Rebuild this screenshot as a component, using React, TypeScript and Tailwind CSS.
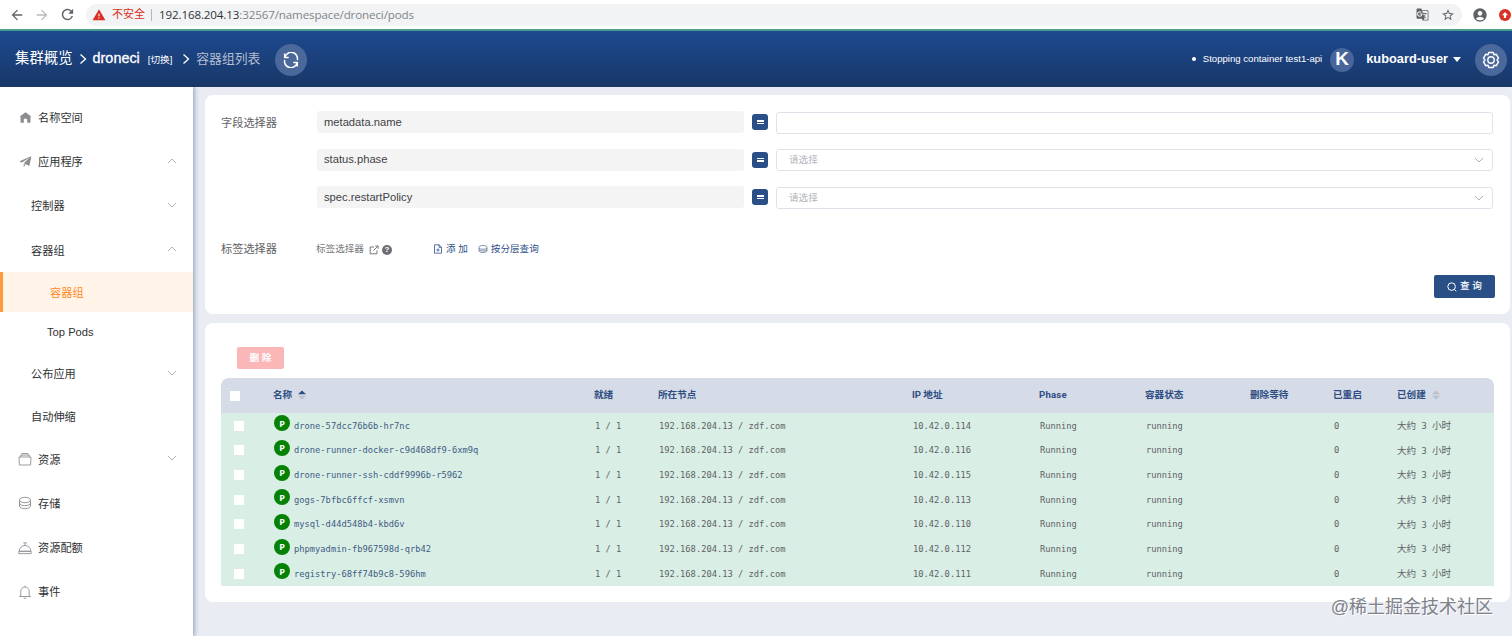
import type { ReactNode } from "react";
import clsx from "clsx";
import {
  MdArrowBack,
  MdArrowForward,
  MdGTranslate,
  MdRefresh,
  MdStarBorder,
  MdWarning,
  MdAccountCircle,
} from "react-icons/md";

type IconName = "home" | "plane" | "files" | "coins" | "dish" | "bell";

type MenuItem = {
  label: string;
  icon?: IconName;
  arrow?: "up" | "down";
  active?: boolean;
  className: string;
};

const menu: MenuItem[] = [
  { label: "名称空间", icon: "home", className: "h-[45px] pl-[18px]" },
  { label: "应用程序", icon: "plane", arrow: "up", className: "h-[43px] pl-[18px]" },
  { label: "控制器", arrow: "down", className: "h-[45px] pl-[31px]" },
  { label: "容器组", arrow: "up", className: "h-[44px] pl-[31px]" },
  { label: "容器组", active: true, className: "h-10 pl-[47px]" },
  { label: "Top Pods", className: "h-10 pl-[47px]" },
  { label: "公布应用", arrow: "down", className: "h-[43px] pl-[31px]" },
  { label: "自动伸缩", className: "h-[43px] pl-[31px]" },
  { label: "资源", icon: "files", arrow: "down", className: "h-[42px] pl-[18px]" },
  { label: "存储", icon: "coins", className: "h-[46px] pl-[18px]" },
  { label: "资源配额", icon: "dish", className: "h-[43px] pl-[18px]" },
  { label: "事件", icon: "bell", className: "h-[45px] pl-[18px]" },
];

const pods = [
  { name: "drone-57dcc76b6b-hr7nc", ip: "10.42.0.114" },
  { name: "drone-runner-docker-c9d468df9-6xm9q", ip: "10.42.0.116" },
  { name: "drone-runner-ssh-cddf9996b-r5962", ip: "10.42.0.115" },
  { name: "gogs-7bfbc6ffcf-xsmvn", ip: "10.42.0.113" },
  { name: "mysql-d44d548b4-kbd6v", ip: "10.42.0.110" },
  { name: "phpmyadmin-fb967598d-qrb42", ip: "10.42.0.112" },
  { name: "registry-68ff74b9c8-596hm", ip: "10.42.0.111" },
];

const columns =
  "grid grid-cols-[52px_321px_64px_254px_127px_106px_105px_83px_64px_1fr]";

const MenuIcon = ({ name }: { name: IconName }) => {
  if (name === "home") {
    return (
      <svg viewBox="0 0 1024 1024" className="size-[13px] fill-[#8b8d91]">
        <path d="M512 96 60 440h60v488h260V660q0-50 50-50h164q50 0 50 50v268h260V440h60z" />
      </svg>
    );
  }
  if (name === "plane") {
    return (
      <svg viewBox="0 0 1024 1024" className="size-[13px] fill-[#8b8d91]">
        <path d="m32 500 944-404-160 776-440-232L820 220 230 590zM370 700l150 76-150 160z" />
      </svg>
    );
  }
  return (
    <svg
      viewBox="0 0 14 14"
      className="size-[14px] fill-none stroke-[#8f9195] stroke-[0.9]"
      strokeLinejoin="round"
    >
      {name === "files" && (
        <path d="M1 5h12l-.4 8H1.4zM2.6 5V3.1h8.8V5M4 3V1.5h6V3" />
      )}
      {name === "coins" && (
        <>
          <ellipse cx="7" cy="4" rx="5.5" ry="2.7" />
          <path d="M1.5 4v3c0 1.5 2.5 2.7 5.5 2.7s5.5-1.2 5.5-2.7V4M1.5 7v3c0 1.5 2.5 2.7 5.5 2.7s5.5-1.2 5.5-2.7V7" />
        </>
      )}
      {name === "dish" && (
        <path d="M1.2 10.3a5.8 5.8 0 0 1 11.6 0zM.8 12.6h12.4V10.3H.8zM7 4.3V2M5.2 1.8h3.6" />
      )}
      {name === "bell" && (
        <path d="M2.8 11.5V6.2a4.2 4.2 0 0 1 8.4 0v5.3M1 11.5h12M7 2V.8M5.7 13.2h2.6" />
      )}
    </svg>
  );
};

const Chevron = ({ up = false }: { up?: boolean }) => (
  <svg
    viewBox="0 0 10 10"
    className={clsx("size-[10px] fill-none stroke-[#a6a9ae] stroke-[0.9]", up && "rotate-180")}
  >
    <path d="m1 3 4 4 4-4" />
  </svg>
);

const BrowserBar = () => (
  <div className="flex h-[29px] shrink-0 items-center bg-white pl-[9px] font-['Open_Sans','Noto_Sans_CJK_SC',sans-serif] text-[#5f6368]">
    <MdArrowBack size={16} />
    <MdArrowForward size={16} className="ml-[9px] text-[#b9bbbe]" />
    <MdRefresh size={17} className="ml-[9px]" />
    <div className="ml-[10px] flex h-[22px] flex-1 items-center rounded-full bg-[#f1f3f4] pl-[6px] pr-[7px]">
      <MdWarning size={14} className="text-[#d93025]" />
      <span className="ml-[6px] text-[11px] text-[#d93025]">不安全</span>
      <span className="ml-[6px] h-3 w-px bg-[#b5b7ba]" />
      <span className="ml-[7px] text-[11.6px] tracking-[-0.13px] text-[#80868b]">
        <span className="text-[#303338]">192.168.204.13</span>
        :32567/namespace/droneci/pods
      </span>
      <MdGTranslate size={13} className="ml-auto" />
      <MdStarBorder size={14} className="ml-[12px]" />
    </div>
    <MdAccountCircle size={16} className="ml-[10px]" />
    <span className="ml-[11px] mr-px flex size-3 items-center justify-center rounded-full bg-[#d93025]">
      <svg viewBox="0 0 8 8" className="size-2 fill-white">
        <path d="M4 1 1 4.3h1.9V7h2.2V4.3H7z" />
      </svg>
    </span>
  </div>
);

const Separator = () => (
  <svg viewBox="0 0 8 12" className="h-3 w-2 fill-none stroke-white stroke-[1.3]">
    <path d="m1.5 1.5 5 4.5-5 4.5" />
  </svg>
);

const Header = () => (
  <header className="z-20 flex h-[58px] shrink-0 items-center border-t-2 border-[#4a9c8c] bg-linear-to-b from-[#1d4990] to-[#183767] pb-px pl-[15px] pr-[5px] text-white">
    <span className="text-[14.4px]">集群概览</span>
    <span className="ml-[6px]">
      <Separator />
    </span>
    <span className="ml-[6px] text-[14.4px] [-webkit-text-stroke:0.3px]">droneci</span>
    <span className="ml-2 mt-[3px] text-[9.6px]">[切换]</span>
    <span className="ml-[10px]">
      <Separator />
    </span>
    <span className="ml-[6px] mt-px text-[12.8px] text-[#b4bfd1]">容器组列表</span>
    <button className="ml-[15px] mt-[3px] flex size-8 items-center justify-center rounded-full bg-[#4b689b]">
      <svg viewBox="0 0 16 16" className="size-4 fill-none stroke-white stroke-[1.5]">
        <path d="M1.7 1.5v4h4M14.3 14.5v-4h-4M2 5.2A6.3 6.3 0 0 1 14.3 8M1.7 8A6.3 6.3 0 0 0 14 10.8" />
      </svg>
    </button>
    <span className="ml-auto mt-px size-1 rounded-full bg-white" />
    <span className="ml-[7px] mt-0.5 text-[9.6px]">Stopping container test1-api</span>
    <span className="ml-2 mt-0.5 flex size-6 items-center justify-center rounded-full bg-[#47659a] text-[19px] font-bold">
      K
    </span>
    <span className="ml-3 text-[12.8px] font-bold">kuboard-user</span>
    <span className="ml-[5px] mt-px border-x-4 border-t-[5px] border-x-transparent border-t-white" />
    <button className="ml-[14px] mt-[3px] flex size-8 items-center justify-center rounded-full bg-[#4b689b]">
      <svg
        viewBox="0 0 18 18"
        className="size-[18px] fill-none stroke-white stroke-[1.4]"
        strokeLinejoin="round"
      >
        <path d="M6.8 1.5h4.4l.8 2.2 2.3-.4 2.2 3.8L15 9l1.5 1.9-2.2 3.8-2.3-.4-.8 2.2H6.8L6 14.3l-2.3.4-2.2-3.8L3 9 1.5 7.1l2.2-3.8 2.3.4z" />
        <circle cx="9" cy="9" r="3.2" />
      </svg>
    </button>
  </header>
);

const Sidebar = () => (
  <nav className="z-10 w-[193px] shrink-0 bg-white pt-2 text-[11.2px] text-[#303133] shadow-[0_0_5px_1px_#8998b3]">
    {menu.map((item, i) => (
      <div
        key={i}
        className={clsx(
          "flex items-center pr-4",
          item.className,
          item.active && "border-l-[3px] border-[#ff9a3c] bg-[#fff4e7] text-[#ff8a26]"
        )}
      >
        {item.icon && (
          <span className="mr-[6px] flex w-[14px] justify-center">
            <MenuIcon name={item.icon} />
          </span>
        )}
        <span className={clsx(item.label !== "Top Pods" && "pt-0.5")}>{item.label}</span>
        {item.arrow && (
          <span className="mb-0.5 ml-auto">
            <Chevron up={item.arrow === "up"} />
          </span>
        )}
      </div>
    ))}
  </nav>
);

const FieldRow = ({ label, children }: { label: string; children?: ReactNode }) => (
  <div className="flex h-[22px] items-center">
    <div className="flex h-[22px] w-[427px] items-center rounded-[3px] bg-[#f4f4f4] pl-[7px] text-[11.2px] text-[#404347]">
      {label}
    </div>
    <span className="ml-2 flex size-4 flex-col items-center justify-center gap-px rounded-[3px] bg-[#2a4f87]">
      <span className="h-[1.5px] w-[7px] bg-white" />
      <span className="h-[1.5px] w-[7px] bg-white" />
    </span>
    <div className="ml-2 mt-px flex h-[22px] flex-1 items-center justify-between rounded-[3px] border border-[#dfe2e8] pl-3 pr-2 text-[9.6px] text-[#b4b7bd]">
      {children}
    </div>
  </div>
);

const SelectPlaceholder = () => (
  <>
    <span className="pt-px">请选择</span>
    <Chevron />
  </>
);

const FilterCard = () => (
  <section className="flex h-[219px] flex-col rounded-lg bg-white pl-4 pr-[17px] pt-4 text-[#606266]">
    <div className="flex">
      <span className="w-24 pt-1 text-[11.2px]">字段选择器</span>
      <div className="flex flex-1 flex-col gap-[15.5px]">
        <FieldRow label="metadata.name" />
        <FieldRow label="status.phase">
          <SelectPlaceholder />
        </FieldRow>
        <FieldRow label="spec.restartPolicy">
          <SelectPlaceholder />
        </FieldRow>
      </div>
    </div>
    <div className="mt-[30px] flex h-[22px] items-center text-[9.6px]">
      <span className="w-[95px] text-[11.2px]">标签选择器</span>
      <span className="pt-px text-[#77797d]">标签选择器</span>
      <svg viewBox="0 0 10 10" className="ml-[5px] mt-px size-[10px] fill-none stroke-[#77797d]">
        <path d="M5 2H1.2v6.8H8V5.4M6.3 1h2.8v2.8M9 1 4.5 5.5" />
      </svg>
      <span className="ml-[3px] mt-px flex size-[10px] items-center justify-center rounded-full bg-[#6d6f73] text-[8px] font-bold text-white">
        ?
      </span>
      <div className="ml-[41px] flex items-center text-[#2d5089]">
        <svg viewBox="0 0 10 10" className="size-[10px] fill-none stroke-[#2d5089] stroke-[0.8]">
          <path d="M1.5.8h4.6l2.4 2.4v6h-7zM6 .8v2.5h2.5M3.4 6h3.2M5 4.4v3.2" />
        </svg>
        <span className="ml-[3px]">添 加</span>
        <svg
          viewBox="0 0 10 10"
          className="ml-[10px] size-[10px] fill-none stroke-[#5f7392] stroke-[0.8]"
        >
          <path d="M1 3.6C1 2.2 2.5 1.5 5 1.5s4 .7 4 2.1v2.8c0 1.4-1.5 2.1-4 2.1s-4-.7-4-2.1zM1 4.5c1.5 1 6.5 1 8 0M1 6.2c1.5 1 6.5 1 8 0" />
        </svg>
        <span className="ml-[3px]">按分层查询</span>
      </div>
    </div>
    <button className="mr-[-2px] mt-[15px] flex h-[23px] w-[61px] items-center justify-center gap-[3px] self-end rounded-[2px] bg-[#2a4f87] text-[9.6px] font-medium text-white">
      <svg viewBox="0 0 10 10" className="size-[10px] fill-none stroke-white">
        <circle cx="4.6" cy="4.6" r="3.8" />
        <path d="m7.3 7.3 2 2" />
      </svg>
      查 询
    </button>
  </section>
);

const SortCaret = ({ asc = false }: { asc?: boolean }) => (
  <svg viewBox="0 0 8 10" className="ml-[6px] h-[10px] w-2">
    <path d="M0 4.3 4 .5l4 3.8z" className={asc ? "fill-[#2a4f87]" : "fill-[#bcc0c8]"} />
    <path d="M0 5.7h8L4 9.5z" className="fill-[#bcc0c8]" />
  </svg>
);

const PodTable = () => (
  <div className="overflow-hidden rounded-t-lg">
    <div
      className={clsx(
        columns,
        "h-[35px] items-center bg-[#d5dbe7] font-['Roboto','Noto_Sans_CJK_SC',sans-serif] text-[9.6px] font-bold text-[#2e4d82]"
      )}
    >
      <span className="ml-[9px] size-[10px] bg-white" />
      <span className="flex items-center">
        名称 <SortCaret asc />
      </span>
      <span>就绪</span>
      <span>所在节点</span>
      <span>IP 地址</span>
      <span className="tracking-[0.2px]">Phase</span>
      <span>容器状态</span>
      <span>删除等待</span>
      <span>已重启</span>
      <span className="flex items-center">
        已创建 <SortCaret />
      </span>
    </div>
    {pods.map((pod) => (
      <div
        key={pod.name}
        className={clsx(
          columns,
          "h-[24.66px] items-center bg-[#d9eee4] pt-px font-['DejaVu_Sans_Mono','Noto_Sans_CJK_SC',monospace] text-[8.75px] text-[#606266]"
        )}
      >
        <span className="ml-[13px] size-[10px] bg-white" />
        <span className="flex items-center">
          <span className="mb-[5px] ml-px flex size-4 items-center justify-center rounded-full bg-[#058205] font-['Open_Sans',sans-serif] text-[9px] font-bold text-white">
            P
          </span>
          <span className="ml-1 pt-px text-[#3f5c84]">{pod.name}</span>
        </span>
        <span className="pl-px pt-px">1 / 1</span>
        <span className="pl-px pt-px">192.168.204.13 / zdf.com</span>
        <span className="pl-px pt-px">{pod.ip}</span>
        <span className="pl-px pt-px">Running</span>
        <span className="pl-px pt-px">running</span>
        <span />
        <span className="pl-px pt-px">0</span>
        <span className="pt-px">
          <span className="text-[9.6px]">大约</span> 3 <span className="text-[9.6px]">小时</span>
        </span>
      </div>
    ))}
  </div>
);

const App = () => {
  return (
    <div className="relative flex h-[636px] w-[1512px] flex-col overflow-hidden bg-[#e9ecf3] font-['Liberation_Sans','Noto_Sans_CJK_SC',sans-serif] leading-normal">
      <BrowserBar />
      <Header />
      <div className="flex min-h-0 flex-1">
        <Sidebar />
        <main className="flex flex-1 flex-col gap-[9px] pl-3 pr-[2px] pt-2">
          <FilterCard />
          <section className="h-[279px] rounded-lg bg-white px-4 pt-[24px]">
            <button className="mb-[9px] ml-4 flex h-[22px] w-[47px] items-center justify-center rounded-[2px] bg-[#fbb6b8] text-[9.6px] font-bold text-white">
              删 除
            </button>
            <PodTable />
          </section>
        </main>
      </div>
      <div className="absolute bottom-[15px] right-[19px] text-[18px] text-[#7d8188] [text-shadow:1px_1px_0_#ffffff]">
        @稀土掘金技术社区
      </div>
    </div>
  );
};

export default App;
